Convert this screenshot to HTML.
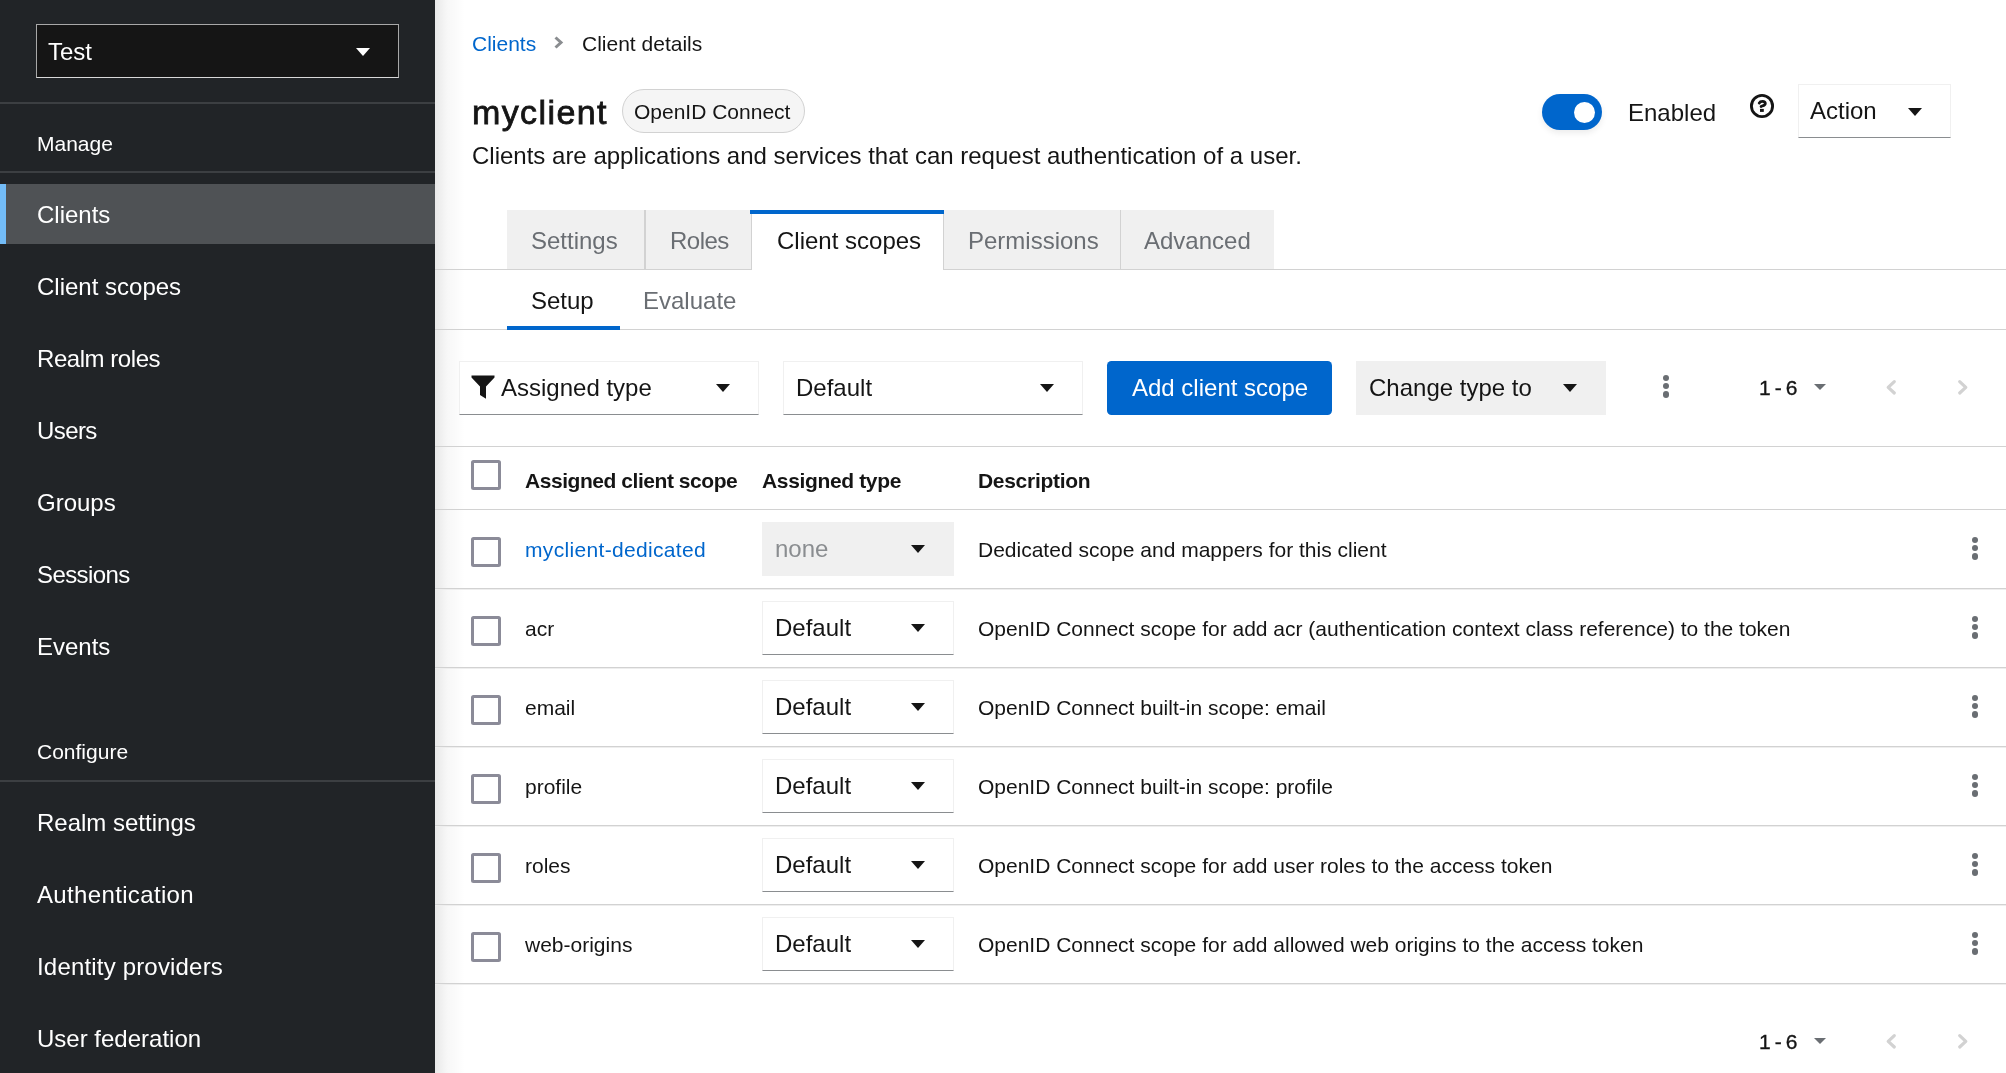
<!DOCTYPE html>
<html><head><meta charset="utf-8">
<style>
*{box-sizing:border-box;margin:0;padding:0}
html,body{width:2006px;height:1073px;overflow:hidden;background:#fff;-webkit-font-smoothing:antialiased;font-family:"Liberation Sans",sans-serif;color:#151515}
.a{position:absolute}
.t{position:absolute;white-space:nowrap;line-height:1;will-change:transform}
.s24{font-size:24px}
.s21{font-size:21px}
#side{position:absolute;left:0;top:0;width:435px;height:1073px;background:#212427}
#side .t{color:#fff}
#shadow{position:absolute;left:435px;top:0;width:30px;height:1073px;background:linear-gradient(to right,rgba(0,0,0,0.09),rgba(0,0,0,0.03) 40%,rgba(0,0,0,0))}
.hl{position:absolute;height:1.5px;background:#d2d2d2}
.sel{position:absolute;background:#fff;border:1.5px solid #f0f0f0;border-bottom-color:#8a8d90}
.caret{position:absolute;width:0;height:0;border-left:7.5px solid transparent;border-right:7.5px solid transparent;border-top:8.5px solid #151515}
.cb{position:absolute;width:30px;height:30px;border:3px solid #8b8b98;border-radius:2.5px;background:#fff}
.kebab{position:absolute;width:7px;height:24px}
.kebab i{position:absolute;left:0.3px;width:6.3px;height:6.3px;border-radius:50%;background:#6a6e73}
.tab{position:absolute;top:210px;height:59px;background:#f0f0f0}
.gray{color:#6a6e73}
</style></head>
<body>
<div id="side">
  <div class="a" style="left:36px;top:24px;width:363px;height:54px;background:#151515;border:1.5px solid #a8a8a8;border-bottom-color:#d8d8d8"></div>
  <div class="t s24" style="left:48px;top:40px">Test</div>
  <div class="caret" style="left:355.5px;top:47.5px;border-top-color:#fff"></div>
  <div class="a" style="left:0;top:102px;width:435px;height:2px;background:#3c3f42"></div>
  <div class="t s21" style="left:36.5px;top:133.2px">Manage</div>
  <div class="a" style="left:0;top:171px;width:435px;height:1.5px;background:#3c3f42"></div>
  <div class="a" style="left:0;top:184px;width:435px;height:60px;background:#4f5255"></div>
  <div class="a" style="left:0;top:184px;width:6px;height:60px;background:#73bcf7"></div>
  <div class="t s24" style="left:36.5px;top:202.7px">Clients</div>
  <div class="t s24" style="left:36.5px;top:274.7px">Client scopes</div>
  <div class="t s24" style="left:36.5px;top:346.7px;letter-spacing:-0.45px">Realm roles</div>
  <div class="t s24" style="left:36.5px;top:418.7px;letter-spacing:-0.6px">Users</div>
  <div class="t s24" style="left:36.5px;top:490.7px">Groups</div>
  <div class="t s24" style="left:36.5px;top:562.7px;letter-spacing:-0.6px">Sessions</div>
  <div class="t s24" style="left:36.5px;top:634.7px">Events</div>
  <div class="t s21" style="left:36.5px;top:741.2px">Configure</div>
  <div class="a" style="left:0;top:780px;width:435px;height:1.5px;background:#3c3f42"></div>
  <div class="t s24" style="left:36.5px;top:810.7px">Realm settings</div>
  <div class="t s24" style="left:36.5px;top:882.7px;letter-spacing:0.35px">Authentication</div>
  <div class="t s24" style="left:36.5px;top:954.7px;letter-spacing:0.18px">Identity providers</div>
  <div class="t s24" style="left:36.5px;top:1026.7px">User federation</div>
</div>
<div id="shadow"></div>

<!-- MAIN -->
<div class="t " style="left:471.5px;top:33.2px;font-size:21px;color:#0066cc">Clients</div>
<svg class="a" style="left:553px;top:36px" width="11" height="13" viewBox="0 0 11 13"><path d="M2.5 1.5 L8 6.5 L2.5 11.5" fill="none" stroke="#8a8d90" stroke-width="3" stroke-linejoin="miter"/></svg>
<div class="t " style="left:581.5px;top:33.2px;font-size:21px;">Client details</div>
<div class="t " style="left:472px;top:94.6px;font-size:34px;-webkit-text-stroke:0.8px #151515;letter-spacing:1.4px">myclient</div>
<div class="a" style="left:622px;top:89px;width:183px;height:44px;border:1.5px solid #d2d2d2;border-radius:22px;background:#f5f5f5"></div>
<div class="t " style="left:634.4px;top:100.8px;font-size:21px;">OpenID Connect</div>
<div class="t " style="left:471.5px;top:144.2px;font-size:24px;">Clients are applications and services that can request authentication of a user.</div>
<div class="a" style="left:1542px;top:94px;width:60px;height:36px;border-radius:18px;background:#0066cc;box-shadow:0 3px 6px rgba(0,0,0,0.08)"></div>
<div class="a" style="left:1573.7px;top:101.7px;width:21.5px;height:21.5px;border-radius:50%;background:#fff"></div>
<div class="t " style="left:1627.6px;top:100.5px;font-size:24px;">Enabled</div>
<svg class="a" style="left:1749px;top:93px" width="26" height="26" viewBox="0 0 26 26"><circle cx="13" cy="13" r="10.6" fill="none" stroke="#151515" stroke-width="2.85"/><path d="M10.2 10.1 C10.8 8.9 12 8.4 13.5 8.4 C15.2 8.4 16.3 9.3 16.3 10.6 C16.3 12 14.9 12.6 13.4 12.9 C12.7 13 12.3 13.2 12.1 13.5" fill="none" stroke="#151515" stroke-width="2.8" stroke-linecap="round"/><rect x="11" y="15.9" width="3.8" height="3" fill="#151515"/></svg>
<div class="sel" style="left:1798px;top:84px;width:153px;height:54px"></div>
<div class="t " style="left:1810px;top:99.4px;font-size:24px;">Action</div>
<div class="caret" style="left:1907.5px;top:108px"></div>
<div class="hl" style="left:435px;top:268.5px;width:1571px"></div>
<div class="tab" style="left:507px;width:137.5px"></div>
<div class="a" style="left:644px;top:210px;width:1.5px;height:59px;background:#d2d2d2"></div>
<div class="tab" style="left:645.5px;width:105.5px"></div>
<div class="a" style="left:751px;top:210px;width:193px;height:60px;background:#fff;border-left:1.5px solid #d2d2d2;border-right:1.5px solid #d2d2d2"></div>
<div class="a" style="left:750px;top:210px;width:194px;height:3.5px;background:#0066cc"></div>
<div class="tab" style="left:944px;width:176px"></div>
<div class="a" style="left:1119.5px;top:210px;width:1.5px;height:59px;background:#d2d2d2"></div>
<div class="tab" style="left:1121px;width:153px"></div>
<div class="t " style="left:531.4px;top:228.8px;font-size:24px;color:#6a6e73">Settings</div>
<div class="t " style="left:670.3px;top:228.8px;font-size:24px;color:#6a6e73;letter-spacing:-0.5px">Roles</div>
<div class="t " style="left:776.5px;top:228.8px;font-size:24px;color:#151515">Client scopes</div>
<div class="t " style="left:968.4px;top:228.8px;font-size:24px;color:#6a6e73">Permissions</div>
<div class="t " style="left:1143.9px;top:228.8px;font-size:24px;color:#6a6e73">Advanced</div>
<div class="hl" style="left:435px;top:328.5px;width:1571px"></div>
<div class="a" style="left:507px;top:326px;width:113px;height:4px;background:#0066cc"></div>
<div class="t " style="left:531px;top:289.3px;font-size:24px;">Setup</div>
<div class="t " style="left:643.3px;top:289.3px;font-size:24px;color:#6a6e73">Evaluate</div>
<div class="sel" style="left:459px;top:361px;width:300px;height:54px"></div>
<svg class="a" style="left:471px;top:375px" width="24" height="24" viewBox="0 0 24 24"><path d="M0.5 0.5 H23.5 V2.5 L15 11.5 V23.8 L9 20 V11.5 L0.5 2.5 Z" fill="#151515"/></svg>
<div class="t " style="left:501.3px;top:375.7px;font-size:24px;">Assigned type</div>
<div class="caret" style="left:715.5px;top:384px"></div>
<div class="sel" style="left:783px;top:361px;width:300px;height:54px"></div>
<div class="t " style="left:796px;top:375.7px;font-size:24px;">Default</div>
<div class="caret" style="left:1039.5px;top:384px"></div>
<div class="a" style="left:1107px;top:361px;width:225px;height:54px;background:#0066cc;border-radius:4.5px"></div>
<div class="t " style="left:1131.6px;top:375.7px;font-size:24px;color:#fff">Add client scope</div>
<div class="a" style="left:1356px;top:361px;width:250px;height:54px;background:#f0f0f0"></div>
<div class="t " style="left:1368.8px;top:375.7px;font-size:24px;">Change type to</div>
<div class="caret" style="left:1562.5px;top:383.7px"></div>
<div class="kebab" style="left:1662.6px;top:375px"><i style="top:0"></i><i style="top:8.2px"></i><i style="top:16.4px"></i></div>
<div class="t " style="left:1758.6px;top:377.4px;font-size:21px;letter-spacing:-0.9px;-webkit-text-stroke:0.35px #151515">1 - 6</div>
<div class="caret" style="left:1814px;top:383.9px;border-left-width:6.3px;border-right-width:6.3px;border-top-width:6.9px;border-top-color:#6a6e73"></div>
<svg class="a" style="left:1884px;top:378.7px" width="14" height="17" viewBox="0 0 14 17"><path d="M10.3 2.6 L4.2 8.3 L10.3 14" fill="none" stroke="#d2d2d2" stroke-width="3.2" stroke-linecap="round" stroke-linejoin="round"/></svg>
<svg class="a" style="left:1956px;top:378.7px" width="14" height="17" viewBox="0 0 14 17"><path d="M3.7 2.6 L9.8 8.3 L3.7 14" fill="none" stroke="#d2d2d2" stroke-width="3.2" stroke-linecap="round" stroke-linejoin="round"/></svg>
<div class="hl" style="left:435px;top:445.5px;width:1571px"></div>
<div class="cb" style="left:471px;top:460px"></div>
<div class="t " style="left:525.4px;top:470.2px;font-size:21px;font-weight:bold;letter-spacing:-0.45px">Assigned client scope</div>
<div class="t " style="left:762.4px;top:470.2px;font-size:21px;font-weight:bold;letter-spacing:-0.35px">Assigned type</div>
<div class="t " style="left:978.2px;top:470.2px;font-size:21px;font-weight:bold;letter-spacing:-0.3px">Description</div>
<div class="hl" style="left:435px;top:508.8px;width:1571px"></div>
<div class="cb" style="left:471px;top:536.8px"></div>
<div class="t " style="left:525.4px;top:539.2px;font-size:21px;color:#0066cc;letter-spacing:0.33px">myclient-dedicated</div>
<div class="a" style="left:762px;top:522.0px;width:191.5px;height:53.5px;background:#f0f0f0"></div>
<div class="t " style="left:775px;top:537.2px;font-size:24px;color:#8a8d90">none</div>
<div class="caret" style="left:910.5px;top:545.0px"></div>
<div class="t " style="left:978.2px;top:539.2px;font-size:21px;">Dedicated scope and mappers for this client</div>
<div class="kebab" style="left:1971.6px;top:536.9px"><i style="top:0"></i><i style="top:8.2px"></i><i style="top:16.4px"></i></div>
<div class="hl" style="left:435px;top:588px;width:1571px;height:1px;box-shadow:0 1px 0 #eeeeee"></div>
<div class="cb" style="left:471px;top:615.8px"></div>
<div class="t " style="left:525.4px;top:618.2px;font-size:21px;">acr</div>
<div class="sel" style="left:762px;top:601.0px;width:191.5px;height:53.5px"></div>
<div class="t " style="left:775px;top:615.7px;font-size:24px;">Default</div>
<div class="caret" style="left:910.5px;top:624.0px"></div>
<div class="t " style="left:978.2px;top:618.2px;font-size:21px;">OpenID Connect scope for add acr (authentication context class reference) to the token</div>
<div class="kebab" style="left:1971.6px;top:615.9px"><i style="top:0"></i><i style="top:8.2px"></i><i style="top:16.4px"></i></div>
<div class="hl" style="left:435px;top:667px;width:1571px;height:1px;box-shadow:0 1px 0 #eeeeee"></div>
<div class="cb" style="left:471px;top:694.8px"></div>
<div class="t " style="left:525.4px;top:697.2px;font-size:21px;">email</div>
<div class="sel" style="left:762px;top:680.0px;width:191.5px;height:53.5px"></div>
<div class="t " style="left:775px;top:694.7px;font-size:24px;">Default</div>
<div class="caret" style="left:910.5px;top:703.0px"></div>
<div class="t " style="left:978.2px;top:697.2px;font-size:21px;">OpenID Connect built-in scope: email</div>
<div class="kebab" style="left:1971.6px;top:694.9px"><i style="top:0"></i><i style="top:8.2px"></i><i style="top:16.4px"></i></div>
<div class="hl" style="left:435px;top:746px;width:1571px;height:1px;box-shadow:0 1px 0 #eeeeee"></div>
<div class="cb" style="left:471px;top:773.8px"></div>
<div class="t " style="left:525.4px;top:776.2px;font-size:21px;">profile</div>
<div class="sel" style="left:762px;top:759.0px;width:191.5px;height:53.5px"></div>
<div class="t " style="left:775px;top:773.7px;font-size:24px;">Default</div>
<div class="caret" style="left:910.5px;top:782.0px"></div>
<div class="t " style="left:978.2px;top:776.2px;font-size:21px;">OpenID Connect built-in scope: profile</div>
<div class="kebab" style="left:1971.6px;top:773.9px"><i style="top:0"></i><i style="top:8.2px"></i><i style="top:16.4px"></i></div>
<div class="hl" style="left:435px;top:825px;width:1571px;height:1px;box-shadow:0 1px 0 #eeeeee"></div>
<div class="cb" style="left:471px;top:852.8px"></div>
<div class="t " style="left:525.4px;top:855.2px;font-size:21px;">roles</div>
<div class="sel" style="left:762px;top:838.0px;width:191.5px;height:53.5px"></div>
<div class="t " style="left:775px;top:852.7px;font-size:24px;">Default</div>
<div class="caret" style="left:910.5px;top:861.0px"></div>
<div class="t " style="left:978.2px;top:855.2px;font-size:21px;">OpenID Connect scope for add user roles to the access token</div>
<div class="kebab" style="left:1971.6px;top:852.9px"><i style="top:0"></i><i style="top:8.2px"></i><i style="top:16.4px"></i></div>
<div class="hl" style="left:435px;top:904px;width:1571px;height:1px;box-shadow:0 1px 0 #eeeeee"></div>
<div class="cb" style="left:471px;top:931.8px"></div>
<div class="t " style="left:525.4px;top:934.2px;font-size:21px;">web-origins</div>
<div class="sel" style="left:762px;top:917.0px;width:191.5px;height:53.5px"></div>
<div class="t " style="left:775px;top:931.7px;font-size:24px;">Default</div>
<div class="caret" style="left:910.5px;top:940.0px"></div>
<div class="t " style="left:978.2px;top:934.2px;font-size:21px;">OpenID Connect scope for add allowed web origins to the access token</div>
<div class="kebab" style="left:1971.6px;top:931.9px"><i style="top:0"></i><i style="top:8.2px"></i><i style="top:16.4px"></i></div>
<div class="hl" style="left:435px;top:983px;width:1571px;height:1px;box-shadow:0 1px 0 #eeeeee"></div>
<div class="t " style="left:1758.6px;top:1031.4px;font-size:21px;letter-spacing:-0.9px;-webkit-text-stroke:0.35px #151515">1 - 6</div>
<div class="caret" style="left:1814px;top:1037.9px;border-left-width:6.3px;border-right-width:6.3px;border-top-width:6.9px;border-top-color:#6a6e73"></div>
<svg class="a" style="left:1884px;top:1032.7px" width="14" height="17" viewBox="0 0 14 17"><path d="M10.3 2.6 L4.2 8.3 L10.3 14" fill="none" stroke="#d2d2d2" stroke-width="3.2" stroke-linecap="round" stroke-linejoin="round"/></svg>
<svg class="a" style="left:1956px;top:1032.7px" width="14" height="17" viewBox="0 0 14 17"><path d="M3.7 2.6 L9.8 8.3 L3.7 14" fill="none" stroke="#d2d2d2" stroke-width="3.2" stroke-linecap="round" stroke-linejoin="round"/></svg>
</body></html>
